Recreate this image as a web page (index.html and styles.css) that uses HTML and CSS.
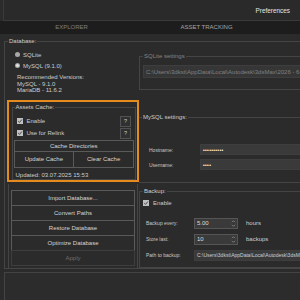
FILE: index.html
```html
<!DOCTYPE html>
<html>
<head>
<meta charset="utf-8">
<link rel="stylesheet" href="styles.css">
</head>
<body>
<div class="win">
  <div class="titlebar"><span class="title">Preferences</span></div>
  <div class="tabs">
    <div class="tab">EXPLORER</div>
    <div class="tab active">ASSET TRACKING</div>
  </div>
  <div class="body">
    <fieldset class="group db">
      <legend>Database:</legend>
      <div class="cols">
        <div class="lcol">
          <div class="radio"><span class="rb"></span>SQLite</div>
          <div class="radio"><span class="rb on"></span>MySQL (9.1.0)</div>
          <div class="rec">Recommended Versions:<br>MySQL - 9.1.0<br>MariaDB - 11.6.2</div>
          <div class="hl">
            <fieldset class="group cache">
              <legend>Assets Cache:</legend>
              <div class="chkrow"><span class="cb"><svg viewBox="0 0 6 6" width="6" height="6"><path d="M1.2 3.1 L2.5 4.4 L4.9 1.5" fill="none" stroke="#4a4a4a" stroke-width="1"/></svg></span><span class="chktxt">Enable</span><span class="qbtn">?</span></div>
              <div class="chkrow"><span class="cb"><svg viewBox="0 0 6 6" width="6" height="6"><path d="M1.2 3.1 L2.5 4.4 L4.9 1.5" fill="none" stroke="#4a4a4a" stroke-width="1"/></svg></span><span class="chktxt">Use for Relink</span><span class="qbtn">?</span></div>
              <div class="btn wide">Cache Directories</div>
              <div class="btnrow"><div class="btn half">Update Cache</div><div class="btn half">Clear Cache</div></div>
              <div class="updated">Updated: 03.07.2025 15:53</div>
            </fieldset>
          </div>
          <div class="actions">
            <div class="btn act">Import Database...</div>
            <div class="btn act">Convert Paths</div>
            <div class="btn act">Restore Database</div>
            <div class="btn act">Optimize Database</div>
            <div class="btn act disabled">Apply</div>
          </div>
        </div>
        <div class="rcol">
          <fieldset class="group sqlite">
            <legend>SQLite settings</legend>
            <div class="field dim">C:\Users\3dkst\AppData\Local\Autodesk\3dsMax\2026 - 64bit\ENU</div>
          </fieldset>
          <fieldset class="group mysql">
            <legend>MySQL settings:</legend>
            <div class="frow"><span class="flabel">Hostname:</span><div class="field pw">••••••••••</div></div>
            <div class="frow"><span class="flabel">Username:</span><div class="field pw">••••</div></div>
          </fieldset>
          <fieldset class="group backup">
            <legend>Backup:</legend>
            <div class="bchk"><span class="cb"><svg viewBox="0 0 6 6" width="6" height="6"><path d="M1.2 3.1 L2.5 4.4 L4.9 1.5" fill="none" stroke="#4a4a4a" stroke-width="1"/></svg></span><span class="chktxt">Enable</span></div>
            <div class="frow b"><span class="flabel">Backup every:</span><div class="spin"><span class="sval">5.00</span><span class="arrows"><svg viewBox="0 0 5 9" width="5" height="9"><path d="M1 3.2 L2.5 1.7 L4 3.2 M1 5.8 L2.5 7.3 L4 5.8" fill="none" stroke="#9a9a9a" stroke-width="0.7"/></svg></span></div><span class="unit">hours</span></div>
            <div class="frow b"><span class="flabel">Store last:</span><div class="spin"><span class="sval">10</span><span class="arrows"><svg viewBox="0 0 5 9" width="5" height="9"><path d="M1 3.2 L2.5 1.7 L4 3.2 M1 5.8 L2.5 7.3 L4 5.8" fill="none" stroke="#9a9a9a" stroke-width="0.7"/></svg></span></div><span class="unit">backups</span></div>
            <div class="frow b"><span class="flabel">Path to backup:</span><div class="field path">C:\Users\3dkst\AppData\Local\Autodesk\3dsMax\2026</div></div>
          </fieldset>
        </div>
      </div>
    </fieldset>
    <div class="footer"></div>
  </div>
</div>
</body>
</html>
```

FILE: styles.css
```css
html, body {
  margin: 0;
  padding: 0;
  background: #2b2b2b;
}
body {
  font-family: "Liberation Sans", Arial, sans-serif;
  font-size: 6px;
  color: #cdcdcd;
}
.win {
  width: 300px;
  height: 300px;
  overflow: hidden;
  display: flex;
  flex-direction: column;
}
.titlebar {
  height: 20px;
  flex-shrink: 0;
  margin-left: 3px;
  border-left: 1px solid #3a3a3a;
  border-bottom: 1px solid #3a3a3a;
  display: flex;
  justify-content: flex-end;
  align-items: center;
  padding-right: 10px;
  background: #2a2a2a;
}
.title {
  font-size: 6.4px;
  color: #e4e4e4;
}
.tabs {
  height: 13px;
  background: #1d1d1d;
  display: flex;
  padding-left: 4px;
  flex-shrink: 0;
}
.tab {
  width: 135px;
  flex-shrink: 0;
  text-align: center;
  line-height: 13px;
  color: #808080;
}
.tab.active {
  color: #a6a6a6;
}
.body {
  flex: 1;
  display: flex;
  flex-direction: column;
  padding-left: 4px;
  min-height: 0;
}
.group {
  border: 1px solid #454545;
  margin: 0;
  padding: 0;
  min-width: 0;
}
.group > legend {
  padding: 0 1px;
  margin-left: 3px;
  line-height: 7px;
  font-size: 6px;
}
.db {
  margin-top: 3.5px;
  width: 400px;
  height: 231px;
  flex-shrink: 0;
  box-sizing: border-box;
}
.cols {
  display: flex;
}
.lcol {
  width: 135px;
  flex-shrink: 0;
  padding-top: 4.5px;
  display: flex;
  flex-direction: column;
}
.radio {
  height: 11px;
  display: flex;
  align-items: center;
  padding-left: 10px;
}
.rb {
  width: 5px;
  height: 5px;
  border-radius: 50%;
  background: #a8a8a8;
  margin-right: 3px;
}
.rb.on {
  background: radial-gradient(circle, #e0e0e0 0 1.2px, #a8a8a8 1.6px);
}
.rec {
  margin-top: 3px;
  padding-left: 12px;
  line-height: 6.7px;
}
.hl {
  margin: 6px 0 0 2px;
  width: 132px;
  height: 82px;
  box-sizing: border-box;
  border: 2px solid #e38c1d;
  padding: 2px 1px 0 2.5px;
  flex-shrink: 0;
}
.cache {
  height: 76px;
  box-sizing: border-box;
  display: flex;
  flex-direction: column;
}
.cache > legend {
  margin-left: 2px;
}
.chkrow {
  height: 12px;
  display: flex;
  align-items: center;
  padding-left: 4px;
  flex-shrink: 0;
}
.chkrow:first-of-type {
  margin-top: 4px;
}
.cb {
  width: 6px;
  height: 6px;
  background: #c0c0c0;
  display: inline-flex;
  margin-right: 4px;
  flex-shrink: 0;
}
.chktxt {
  flex: 1;
}
.qbtn {
  width: 11px;
  height: 11px;
  box-sizing: border-box;
  border: 1px solid #525252;
  background: #303030;
  display: flex;
  align-items: center;
  justify-content: center;
  margin-right: 4px;
  font-size: 5.5px;
}
.btn {
  border: 1px solid #5a5a5a;
  box-sizing: border-box;
  display: flex;
  align-items: center;
  justify-content: center;
  color: #d6d6d6;
  flex-shrink: 0;
}
.wide {
  height: 12.5px;
  margin: 0.5px 1px 0 1px;
}
.btnrow {
  display: flex;
  margin: -1px 1px 0 1px;
}
.half {
  flex: 1;
  height: 16.5px;
}
.half + .half {
  margin-left: -1px;
}
.updated {
  padding: 4.5px 0 0 3px;
  line-height: 7px;
}
.actions {
  margin: 2px 0 0 3px;
  width: 130px;
  border-left: 1px solid #454545;
  border-right: 1px solid #454545;
  padding: 6px 2px 0 2px;
  height: 84px;
  box-sizing: border-box;
  display: flex;
  flex-direction: column;
  flex-shrink: 0;
}
.act {
  height: 16px;
}
.act + .act {
  margin-top: -1px;
}
.act.disabled {
  color: #6e6e6e;
  border-color: #3e3e3e;
}
.rcol {
  flex: 1;
  display: flex;
  flex-direction: column;
  margin-left: -1px;
}
.sqlite {
  margin-top: 8.5px;
  height: 37px;
  box-sizing: border-box;
  flex-shrink: 0;
}
.sqlite > legend {
  color: #858585;
}
.field {
  height: 13px;
  box-sizing: border-box;
  background: #363636;
  border: 1px solid #3e3e3e;
  display: flex;
  align-items: center;
  padding-left: 2px;
  white-space: nowrap;
  overflow: hidden;
}
.sqlite .field {
  margin: 5px 0 0 3px;
  color: #808080;
}
.mysql {
  margin-top: 24px;
  border-width: 1px 0 1px 0;
  height: 69px;
  box-sizing: border-box;
  flex-shrink: 0;
}
.frow {
  display: flex;
  align-items: center;
  height: 15px;
  padding-left: 10px;
  flex-shrink: 0;
}
.mysql .frow:first-of-type {
  margin-top: 21px;
}
.flabel {
  width: 51px;
  font-size: 5px;
  color: #c8c8c8;
  flex-shrink: 0;
}
.pw {
  flex: 1;
  height: 11px;
  background: #3a3a3a;
  color: #ffffff;
  font-size: 5px;
  letter-spacing: 0.3px;
}
.backup {
  margin-top: 4.5px;
  border-width: 1px 0 1px 1px;
  height: 80.5px;
  box-sizing: border-box;
  flex-shrink: 0;
}
.bchk {
  display: flex;
  align-items: center;
  height: 10px;
  padding-left: 3px;
  margin-top: 3px;
  flex-shrink: 0;
}
.frow.b {
  padding-left: 6px;
  height: 16px;
}
.bchk + .frow.b {
  margin-top: 7.8px;
}
.frow.b .flabel {
  width: 48px;
}
.spin {
  width: 44px;
  height: 11px;
  box-sizing: border-box;
  background: #3a3a3a;
  border: 1px solid #555555;
  display: flex;
  align-items: center;
  justify-content: space-between;
  padding-left: 2px;
  color: #dcdcdc;
  flex-shrink: 0;
}
.arrows {
  display: flex;
  margin-right: 1px;
}
.unit {
  margin-left: 8px;
}
.path {
  flex: 1;
  height: 11px;
  background: #3a3a3a;
  color: #cfcfcf;
  font-size: 5px;
}
.footer {
  margin-top: 3px;
  height: 40px;
  border: 1px solid #444444;
  border-right: 0;
  background: #2c2c2c;
  flex-shrink: 0;
}
```
